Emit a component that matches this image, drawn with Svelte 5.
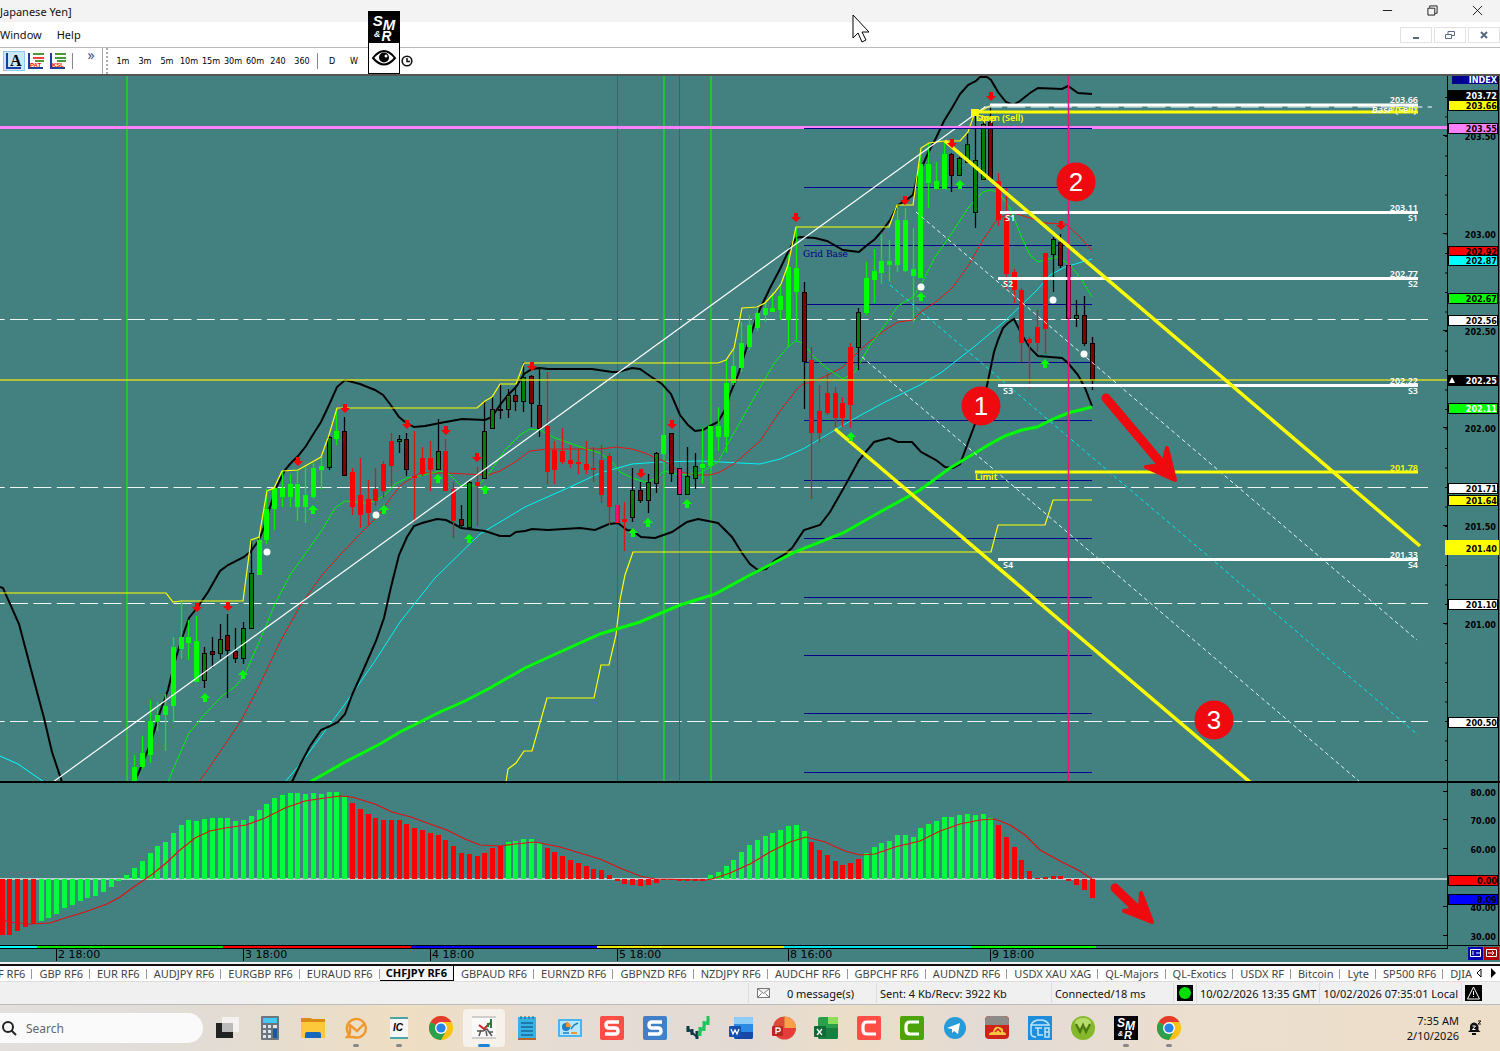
<script>
  const STEP = 7.785
  const FIRST = 134.5
  const ZERO = 879
  const barX = (i) => Math.floor(FIRST + i * STEP) + 0.5

  // kind, high, low, body top, body bottom
  const candles = [
    ['g', 755, 782, 767, 782], ['g', 736, 769, 753, 766], ['g', 700, 763, 721, 754], ['g', 702, 731, 715, 721],
    ['g', 694, 751, 706, 714], ['g', 637, 722, 647, 705], ['g', 600, 659, 637, 648], ['g', 620, 660, 637, 642],
    ['g', 616, 682, 641, 681], ['d', 647, 688, 653, 680], ['m', 637, 668, 651, 654], ['d', 624, 659, 639, 653],
    ['m', 614, 698, 635, 650], ['m', 628, 663, 651, 658], ['d', 622, 664, 628, 658], ['d', 540, 629, 573, 628],
    ['g', 536, 575, 540, 574], ['g', 489, 544, 509, 539], ['g', 487, 530, 488, 508], ['g', 471, 507, 488, 496],
    ['g', 474, 507, 484, 496], ['g', 470, 521, 484, 506], ['g', 467, 523, 495, 506], ['g', 463, 499, 468, 496],
    ['g', 456, 489, 466, 469], ['d', 436, 470, 437, 467], ['g', 408, 445, 431, 438], ['m', 417, 476, 431, 475],
    ['r', 468, 515, 472, 506], ['r', 458, 528, 495, 514], ['r', 480, 526, 499, 512], ['r', 468, 506, 489, 500],
    ['r', 461, 498, 464, 490], ['r', 433, 486, 441, 465], ['d', 435, 453, 439, 441], ['m', 433, 476, 439, 469],
    ['r', 431, 522, 476, 477], ['r', 447, 476, 458, 473], ['r', 441, 491, 458, 469], ['d', 419, 469, 451, 469],
    ['r', 439, 491, 451, 490], ['r', 482, 538, 489, 520], ['m', 505, 528, 519, 525], ['d', 481, 529, 482, 527],
    ['r', 467, 526, 482, 485], ['d', 401, 479, 431, 478], ['d', 397, 428, 409, 428], ['d', 384, 419, 409, 410],
    ['d', 389, 418, 395, 409], ['m', 388, 411, 395, 401], ['d', 362, 412, 377, 401], ['m', 375, 427, 376, 403],
    ['m', 367, 437, 405, 428], ['r', 372, 484, 426, 471], ['r', 441, 484, 450, 469], ['r', 428, 464, 451, 461],
    ['r', 445, 468, 460, 463], ['r', 449, 474, 462, 463], ['r', 441, 474, 464, 469], ['r', 447, 482, 468, 469],
    ['r', 445, 503, 460, 494], ['r', 453, 525, 456, 506], ['r', 505, 522, 505, 522], ['r', 502, 551, 519, 521],
    ['d', 468, 522, 490, 517], ['m', 482, 503, 490, 500], ['d', 474, 513, 482, 500], ['d', 452, 493, 453, 483],
    ['g', 435, 453, 435, 453], ['m', 433, 482, 433, 473], ['m', 468, 494, 468, 494], ['d', 447, 494, 476, 494],
    ['d', 453, 489, 466, 478], ['g', 428, 484, 464, 467], ['g', 426, 465, 426, 465], ['g', 407, 451, 426, 436],
    ['g', 360, 453, 383, 436], ['g', 350, 385, 366, 382], ['g', 322, 372, 343, 367], ['g', 315, 350, 325, 346],
    ['g', 308, 331, 313, 327], ['g', 302, 322, 308, 314], ['g', 293, 312, 308, 311], ['g', 284, 320, 296, 309],
    ['g', 255, 347, 267, 319], ['g', 227, 341, 268, 291], ['m', 282, 409, 292, 361], ['r', 347, 499, 360, 432],
    ['r', 385, 442, 411, 432], ['r', 373, 415, 393, 412], ['r', 387, 427, 393, 417], ['r', 397, 427, 403, 417],
    ['r', 343, 428, 347, 404], ['d', 308, 370, 312, 347], ['g', 262, 315, 278, 312], ['g', 249, 303, 271, 279],
    ['g', 234, 284, 261, 272], ['g', 240, 282, 261, 264], ['g', 206, 272, 220, 264], ['g', 208, 272, 220, 270],
    ['g', 228, 322, 269, 275], ['g', 150, 278, 164, 277], ['g', 143, 208, 164, 182], ['g', 162, 188, 181, 188],
    ['g', 142, 188, 154, 188], ['m', 153, 192, 154, 175], ['d', 157, 176, 158, 175], ['d', 133, 163, 144, 162],
    ['d', 112, 228, 160, 212], ['d', 122, 180, 124, 179], ['m', 106, 179, 122, 178], ['r', 173, 226, 181, 219],
    ['r', 188, 289, 218, 273], ['r', 269, 303, 272, 289], ['r', 288, 362, 290, 342], ['r', 337, 388, 339, 342],
    ['r', 310, 352, 327, 342], ['r', 253, 354, 253, 328], ['d', 237, 292, 239, 254], ['m', 234, 268, 242, 265],
    ['m', 265, 318, 265, 318], ['d', 300, 327, 315, 318], ['m', 296, 346, 315, 343], ['m', 337, 390, 343, 380]
  ]
  const bodyFill = { g: '#00ff00', d: '#008000', m: '#800000', r: '#ff0000' }
  const wickFill = { g: '#00f000', d: '#000', m: '#000', r: '#d81818' }

  const histStart = -17
  const hist = [
    935, 935, 931, 927, 924, 921, 918, 914, 908, 905, 901, 898, 896, 892, 887, 881, 875, 868, 861, 853, 846, 842,
    833, 825, 820, 821, 819, 818, 818, 818, 821, 820, 816, 810, 804, 798, 795, 793, 793, 794, 793, 794, 792, 792,
    797, 803, 809, 814, 818, 820, 820, 820, 824, 828, 830, 833, 835, 840, 846, 853, 854, 856, 853, 848, 846, 842,
    841, 839, 839, 843, 848, 852, 856, 860, 863, 866, 869, 870, 875, 881, 884, 885, 886, 885, 883, 880, 880, 881,
    881, 881, 881, 875, 872, 866, 860, 852, 845, 840, 836, 833, 830, 826, 825, 831, 842, 850, 855, 861, 865, 863,
    859, 853, 847, 843, 841, 835, 835, 837, 828, 824, 821, 817, 817, 815, 814, 815, 814, 818, 825, 837, 847, 860,
    871, 878, 877, 876, 876, 881, 885, 890, 898
  ]
  const rising = [[-12, 27], [48, 52], [74, 86], [94, 110]]
  const histBars = hist.map((y, n) => {
    const i = n + histStart
    const up = rising.some(([a, b]) => i >= a && i <= b)
    return { x: barX(i) - 2.5, y: Math.min(y, ZERO), h: Math.max(1, Math.abs(y - ZERO)), up }
  })

  const bands = [
    '0,587 3,588 19,624 33,677 44,718 52,752 62,782',
    '134,782 139,772 150,745 160,712 168,690 175,661 181,641 189,618 197,608 208,592 220,571 228,565 244,557 251,551 259,540 264,527 270,507 277,486 285,470 290,464 298,456 306,446 314,433 321,422 329,405 337,387 345,380 360,384 375,390 383,395 390,404 399,417 405,422 414,427 425,426 440,423 462,419 485,420 492,417 500,405 508,395 516,387 524,374 532,369 540,368 548,369 592,369 612,372 618,372 632,368 640,369 650,376 662,384 671,394 680,415 688,425 695,431 703,430 710,426 718,422 726,408 730,394 738,375 749,340 755,322 760,309 770,288 780,269 788,252 796,238 800,237 815,238 827,241 843,250 859,252 866,246 875,239 882,231 890,220 898,205 905,201 913,195 917,178 922,167 928,153 936,138 944,121 952,108 960,94 968,85 976,81 980,77 987,77 991,80 998,92 1006,102 1013,105 1020,101 1030,93 1038,88 1062,89 1068,86 1078,93 1092,94',
    '292,782 300,765 310,746 321,730 330,726 338,722 345,714 352,695 362,673 376,641 384,618 391,587 399,555 407,537 414,526 422,523 437,519 446,520 454,524 461,528 485,531 500,536 510,536 516,532 525,531 532,529 548,530 580,528 595,530 609,524 618,523 627,530 633,531 641,537 655,538 672,532 687,522 698,519 718,523 732,537 742,553 750,564 758,570 766,569 775,560 785,554 792,548 804,530 820,525 830,512 846,484 859,460 874,442 889,438 898,442 912,442 921,452 936,460 945,467 953,468 960,464 975,424 985,395 994,352 998,340 1003,328 1008,323 1014,319 1022,335 1030,348 1038,356 1062,358 1068,363 1078,375 1085,388 1092,406'
  ]
  const channelHigh = '0,593 166,593 173,602 181,601 243,601 251,540 259,537 267,491 274,488 282,471 298,470 321,457 329,435 337,408 477,408 485,401 492,397 500,384 516,384 524,363 718,363 726,360 734,348 742,308 757,307 765,303 775,292 781,284 788,265 796,227 889,227 897,205 913,205 921,148 929,143 944,141 960,141 968,132 975,112 983,110 991,105 1092,105'
  const channelLow = '506,782 508,769 516,763 524,751 532,751 547,698 594,698 601,665 609,665 616,635 620,600 625,575 633,552 991,552 998,525 1045,525 1053,500 1092,500'
  const redMa = '199,782 213,762 228,740 242,719 260,684 280,642 300,606 322,575 340,555 360,534 378,516 390,499 400,486 407,481 420,473 447,473 465,474 488,475 500,471 515,462 530,451 547,449 600,449 617,447 632,449 645,453 656,458 668,463 680,472 695,475 710,475 720,472 735,463 760,441 780,411 797,389 803,384 815,381 828,375 843,367 858,352 870,341 885,330 898,322 913,320 921,312 937,301 952,288 968,266 983,240 998,218 1014,213 1030,218 1045,223 1066,224 1080,237 1092,251'
  const greenMa = '168,782 175,765 189,733 205,714 222,696 236,686 245,674 260,640 275,604 290,575 308,550 322,530 335,508 345,501 365,503 375,501 385,495 395,484 407,478 420,476 440,471 448,473 460,485 478,486 490,472 505,450 520,435 530,429 540,430 555,438 575,445 590,450 600,453 612,462 620,472 632,478 645,482 655,479 664,471 680,475 700,473 718,462 730,440 755,396 775,362 788,347 796,341 803,343 815,358 828,369 843,379 855,372 870,345 885,325 898,306 913,297 921,285 935,257 952,233 968,208 983,192 990,190 998,192 1010,208 1022,238 1030,255 1038,262 1048,259 1058,257 1070,265 1082,280 1092,297'
  const cyanMa = '285,782 305,758 345,704 375,661 400,622 435,578 480,534 525,507 570,487 600,473 632,464 660,462 700,461 760,464 780,459 803,449 835,430 850,421 885,402 920,385 942,372 975,346 1005,321 1037,290 1050,275 1065,267 1092,259'
  const slowMa = '310,782 345,762 380,744 400,732 440,712 465,701 490,688 525,668 560,652 600,634 640,622 680,605 715,594 750,575 797,551 843,533 880,512 920,490 950,468 990,444 1005,436 1022,430 1037,427 1053,419 1068,413 1092,407'
  const signal = '0,918 8,922 30,924 50,923 65,918 85,912 107,904 120,897 135,886 150,876 165,864 180,850 195,838 210,831 225,828 246,825 265,818 285,808 305,801 325,798 340,796 352,797 375,804 392,812 411,817 430,824 447,830 465,839 480,845 500,846 515,844 535,842 560,847 580,853 600,859 620,868 640,876 655,879 705,880 712,879 730,873 750,864 770,852 790,842 806,837 825,842 845,851 860,855 875,854 895,847 920,841 940,831 960,824 980,820 995,819 1010,825 1025,835 1040,850 1060,861 1080,871 1092,879'

  const gridRows = [128, 187, 245, 304, 362, 420, 480, 538, 597, 655, 713, 772]
  const sells = [[197, 607], [228, 606], [298, 461], [345, 408], [407, 424], [446, 430], [477, 457], [532, 366], [641, 473], [672, 424], [796, 217], [905, 200], [952, 143], [991, 96], [1061, 225]]
  const buys = [[205, 697], [243, 674], [313, 509], [384, 509], [438, 478], [469, 538], [485, 489], [633, 532], [648, 522], [687, 503], [960, 184], [921, 296], [1045, 363], [851, 436]]
  const dots = [[267, 552], [376, 515], [921, 287], [1053, 300], [1084, 354]]
  const supports = [
    { y: 212, x: 1000, price: '203.11', name: 'S1' },
    { y: 278, x: 998, price: '202.77', name: 'S2' },
    { y: 385, x: 998, price: '202.22', name: 'S3' },
    { y: 559, x: 998, price: '201.33', name: 'S4' }
  ]
  const callouts = [[981, 406, 1], [1076, 182, 2], [1214, 720, 3]]

  const priceTicks = Array.from({ length: 35 }, (_, n) => 97.5 + n * 19.5).filter((y) => y < 780)
  const scale = [[136, '203.50'], [234, '203.00'], [331, '202.50'], [428, '202.00'], [526, '201.50'], [624, '201.00'], [792, '80.00'], [820, '70.00'], [849, '60.00'], [907, '40.00'], [936, '30.00']]
  // y, text, background, text colour
  const tags = [
    [95, '203.72', '#000', '#fff'], [105, '203.66', '#ffff00', '#000'], [128, '203.55', '#ff80ff', '#000'],
    [251, '202.92', '#ff0000', '#000'], [260, '202.87', '#00ffff', '#000'], [298, '202.67', '#00ff00', '#000'],
    [320, '202.56', '#fff', '#000'], [380, '202.25', '#000', '#fff'], [408, '202.11', '#00ff00', '#fff'],
    [488, '201.71', '#fff', '#000'], [500, '201.64', '#ffff00', '#000'], [604, '201.10', '#fff', '#000'],
    [722, '200.50', '#fff', '#000'], [899, '8.09', '#0000ff', '#000'], [880, '0.00', '#ff0000', '#000']
  ]
  const dayBands = [[0, 37, '#00ffff'], [37, 223, '#00e800'], [223, 411, '#ff0000'], [411, 597, '#0000ff'], [597, 784, '#e8e800'], [784, 971, '#00e0e8'], [971, 1096, '#00ff00']]
  const times = [[56, '2 18:00'], [243, '3 18:00'], [430, '4 18:00'], [617, '5 18:00'], [788, '8 16:00'], [990, '9 18:00']]

  const periods = ['1m', '3m', '5m', '10m', '15m', '30m', '60m', '240', '360']
  const tabs = ['F RF6', 'GBP RF6', 'EUR RF6', 'AUDJPY RF6', 'EURGBP RF6', 'EURAUD RF6', 'CHFJPY RF6', 'GBPAUD RF6', 'EURNZD RF6', 'GBPNZD RF6', 'NZDJPY RF6', 'AUDCHF RF6', 'GBPCHF RF6', 'AUDNZD RF6', 'USDX XAU XAG', 'QL-Majors', 'QL-Exotics', 'USDX RF', 'Bitcoin', 'Lyte', 'SP500 RF6', 'DJIA']
  let active = $state('CHFJPY RF6')

  const apps = ['taskview', 'calculator', 'files', 'mail', 'ic', 'chrome', 'charts', 'notepad', 'control', 'snagit', 'snagit-blue', 'trading', 'word', 'powerpoint', 'excel', 'camtasia', 'camtasia-green', 'telegram', 'pot', 'remote', 'webroot', 'smr', 'chrome-work']
  const running = ['mail', 'ic', 'smr', 'chrome-work']
</script>

{#snippet smr()}
  <rect width="24" height="24" fill="#000" />
  <g fill="#fff" font-family="Liberation Sans, sans-serif" font-weight="bold" font-style="italic">
    <text x="3" y="11" font-size="12">S</text>
    <text x="11" y="14" font-size="12">M</text>
    <text x="4" y="20" font-size="7">&amp;</text>
    <text x="10" y="23" font-size="11">R</text>
  </g>
{/snippet}

{#snippet appIcon(name)}
  <svg class="icon" viewBox="0 0 24 24" aria-hidden="true">
    {#if name === 'taskview'}
      <rect x="1" y="7" width="17" height="15" fill="#222" />
      <rect x="7" y="1" width="17" height="15" fill="#f4f4f4" opacity=".9" />
      <rect x="7" y="7" width="11" height="9" fill="#bbb" />
    {:else if name === 'calculator'}
      <rect x="3" width="18" height="24" rx="1" fill="#6b7580" />
      <rect x="5" y="2" width="14" height="5" fill="#45c8f5" />
      {#each [9, 14, 19] as y}
        <rect x="5" {y} width="3" height="3" fill="#dfe5ea" />
        <rect x="10" {y} width="3" height="3" fill="#dfe5ea" />
      {/each}
      <rect x="15" y="9" width="4" height="3" fill="#dfe5ea" />
      <rect x="15" y="13" width="4" height="9" fill="#1558a8" />
    {:else if name === 'files'}
      <path d="M0 2h9l3 1h12v19H0z" fill="#d98a12" />
      <path d="M0 6h24v16H0z" fill="#fdc93a" />
      <path d="M4 22v-4q0-2 2-2h12q2 0 2 2v4z" fill="#1669b8" />
    {:else if name === 'mail'}
      <path d="M6 19.500A9.500 9.500 0 1 1 20 18Q16 23 9 21H3l3-4V9l7 6 7-7" fill="none" stroke="#f0982e" stroke-width="2.400" />
    {:else if name === 'ic'}
      <rect x="3" y="1" width="18" height="22" rx="2" fill="#f7f7f7" />
      <path d="M3 2h18M3 22h18" stroke="#48a8a8" stroke-width="2" />
      <text x="6" y="15" font-size="10" font-weight="bold" font-style="italic" font-family="Liberation Sans, sans-serif">IC</text>
    {:else if name.startsWith('chrome')}
      <circle cx="12" cy="12" r="12" fill="#fbc116" />
      <path d="M12 12L1.600 6A12 12 0 0 1 22.400 6H12z" fill="#e33b2e" />
      <path d="M12 12L1.600 6A12 12 0 0 0 12 24l5-9z" fill="#2b9f4b" />
      <circle cx="12" cy="12" r="6" fill="#fff" />
      <circle cx="12" cy="12" r="4.600" fill="#2484e8" />
    {:else if name === 'charts'}
      <rect y="2" width="24" height="20" fill="#fafafa" />
      <path d="M0 1h24M0 22h24" stroke="#aaa" />
      <path d="M7 9l5 4 6-6" fill="none" stroke="#c22" stroke-width="2" />
      <path d="M19 3v9M16 7v4" stroke="#2a7a3a" stroke-width="2" />
      <path d="M5 15h6l4-2 2 3h4M9 14l-2 6M14 15l1 5M17 16l3 4" fill="none" stroke="#555" stroke-width="1.500" />
    {:else if name === 'notepad'}
      <rect x="3" y="1" width="18" height="22" fill="#36b3e4" />
      <path d="M3 23h18" stroke="#b4652c" stroke-width="2" />
      <path d="M6 7h12M6 11h12M6 15h12M6 19h12" stroke="#146a96" stroke-width="1.500" />
      <path d="M6 0v3M10 0v3M14 0v3M18 0v3" stroke="#245a70" />
    {:else if name === 'control'}
      <rect y="3" width="24" height="18" rx="1" fill="#49b4ee" />
      <rect x="2" y="5" width="20" height="14" fill="#b8e6fc" />
      <circle cx="8" cy="11" r="4" fill="#1d7fc4" />
      <path d="M8 11V6a5 5 0 0 1 5 5z" fill="#f5952f" />
      <path d="M13 13l3-4 4-2M5 17h6" stroke="#1d7fc4" stroke-width="1.500" fill="none" />
      <path d="M13 17h6" stroke="#f5952f" stroke-width="2" />
    {:else if name.startsWith('snagit')}
      <rect width="24" height="24" rx="2" fill={name === 'snagit' ? '#ff4e46' : '#3f80c6'} />
      <path d="M19 6H9q-3 0-3 3t3 3h6q3 0 3 3t-3 3H5" fill="none" stroke="#fff" stroke-width="3.400" />
    {:else if name === 'trading'}
      <path d="M2 10v6M6 13v6M11 15v8" stroke="#123b4a" stroke-width="3" />
      <path d="M1 12l10 9" stroke="#123b4a" stroke-width="2" />
      <path d="M14 11v9M18 5v10M22 0v9" stroke="#1fc45a" stroke-width="3" />
      <path d="M12 19l11-16" stroke="#1fc45a" stroke-width="2" />
    {:else if name === 'word'}
      <rect x="5" y="1" width="19" height="22" rx="2" fill="#2b8ae4" />
      <path d="M5 3q0-2 2-2h15q2 0 2 2v5H5z" fill="#8ecdf8" />
      <path d="M5 16h19v5q0 2-2 2H7q-2 0-2-2z" fill="#1648a8" />
      <rect y="10" width="12" height="11" rx="1" fill="#1450b0" />
      <path d="M2 13l2 5 2-4 2 4 2-5" fill="none" stroke="#fff" stroke-width="1.300" />
    {:else if name === 'powerpoint'}
      <circle cx="12.500" cy="12" r="11.500" fill="#dd4a36" />
      <path d="M12.500.500A11.500 11.500 0 0 1 24 12H12.500z" fill="#f9a04c" />
      <path d="M12.500 12H24A11.500 11.500 0 0 1 5 20z" fill="#e83c3c" />
      <rect y="10" width="11" height="10" rx="1" fill="#b42a20" />
      <path d="M4 18v-6h2.500a1.800 1.800 0 0 1 0 3.600H4" fill="none" stroke="#fff" stroke-width="1.300" />
    {:else if name === 'excel'}
      <rect x="4" y="1" width="20" height="22" rx="2" fill="#26a04a" />
      <path d="M14 1h8q2 0 2 2v5H14z" fill="#8edc5a" />
      <path d="M4 12h20v9q0 2-2 2H6q-2 0-2-2z" fill="#158040" />
      <rect y="10" width="12" height="11" rx="1" fill="#0f6a34" />
      <path d="M3 13l5 6M8 13l-5 6" stroke="#fff" stroke-width="1.300" />
    {:else if name.startsWith('camtasia')}
      <rect width="24" height="24" rx="2" fill={name === 'camtasia' ? '#ff4e46' : '#4da40a'} />
      <path d="M19 6H10q-4 0-4 4v4q0 4 4 4h9" fill="none" stroke="#fff" stroke-width="3.200" />
    {:else if name === 'telegram'}
      <circle cx="12" cy="12" r="11" fill="#279bd8" />
      <path d="M4 12l13-5-2 11-4-3-2 2v-4z" fill="#fff" />
    {:else if name === 'pot'}
      <rect width="24" height="23" rx="4" fill="#cc2418" />
      <path d="M0 9V5q0-5 5-5h14q5 0 5 5v4z" fill="#8d8a88" />
      <path d="M4 19q0-3 4-3 1-6 6-5 5 1 4 5 3 0 3 3z" fill="#fbc540" />
      <path d="M10 16l3-3 3 3" fill="none" stroke="#c22" stroke-width="1.500" />
    {:else if name === 'remote'}
      <rect width="24" height="24" fill="#1e8edc" />
      <path d="M3 9q2-5 9-5t9 5H3v8q0 4 5 4M7 12h7M10 12v7h5M17 12h4v9h-4zM17 16h4" fill="none" stroke="#bfe6fb" stroke-width="1.500" />
    {:else if name === 'webroot'}
      <circle cx="12" cy="12" r="12" fill="#86b82c" />
      <ellipse cx="12" cy="7" rx="8" ry="5" fill="#b8dc6c" />
      <path d="M5 8l4 8 3-7 3 7 4-8" fill="none" stroke="#4b7a12" stroke-width="2.200" />
    {:else}
      {@render smr()}
    {/if}
  </svg>
{/snippet}

<div class="app">
  <header class="titlebar">
    <span>Japanese Yen]</span>
    <div class="window-buttons">
      <button aria-label="Minimize"><svg viewBox="0 0 12 12"><path d="M1 6h10" /></svg></button>
      <button aria-label="Restore"><svg viewBox="0 0 12 12"><path d="M1 3.500h7.500V11H1zM3 3V1h8v8H9" /></svg></button>
      <button aria-label="Close"><svg viewBox="0 0 12 12"><path d="M1 1l10 10M11 1L1 11" /></svg></button>
    </div>
  </header>

  <nav class="menubar">
    <button>Window</button>
    <button>Help</button>
    <div class="child-buttons">
      <button aria-label="Minimize chart"><svg viewBox="0 0 12 12"><path d="M3 9h6" stroke-width="2" /></svg></button>
      <button aria-label="Restore chart"><svg viewBox="0 0 12 12"><path d="M1.500 5.500h6v4h-6zM4 5V2.500h6.500v4H8" /></svg></button>
      <button aria-label="Close chart"><svg viewBox="0 0 12 12"><path d="M3 3l6 6M9 3l-6 6" stroke-width="2" /></svg></button>
    </div>
  </nav>

  <div class="toolbar">
    <button class="tool selected" aria-label="Text">
      <svg viewBox="0 0 18 18"><path d="M2 1v15h14" fill="none" stroke="#1a3fa0" stroke-width="2" /><text x="5" y="14" font-family="Liberation Serif, serif" font-size="16" font-weight="bold">A</text></svg>
    </button>
    {#each ['PAT', 'KSL'] as t, n}
      <button class="tool" aria-label={t}>
        <svg viewBox="0 0 18 18"><path d="M2 1v15h14" fill="none" stroke="#1a3fa0" stroke-width="2" /><path d="M6 2h11M8 9h9" stroke="#4a9a3a" stroke-width="2" /><path d="M6 6h11" stroke={n ? '#4a9a3a' : '#f04040'} stroke-width="2" /><text x="3" y="15" font-family="Liberation Sans, sans-serif" font-size="6" font-weight="bold" fill="#f00">{t}</text></svg>
      </button>
    {/each}
    <span class="rule"></span>
    <button class="more" aria-label="More tools">»</button>
    <span class="grip"></span>
    <div class="periods">
      {#each periods as p}
        <button>{p}</button>
      {/each}
    </div>
    <span class="rule"></span>
    <button class="unit">D</button>
    <button class="unit">W</button>
  </div>

  <svg class="chart" viewBox="0 76 1500 886" role="img" aria-label="CHFJPY chart">
    <defs>
      <clipPath id="plot"><rect x="0" y="76" width="1447" height="706" /></clipPath>
    </defs>
    <rect y="76" width="1500" height="886" fill="#438080" />

    <g clip-path="url(#plot)" fill="none">
      {#each gridRows as y}
        <path d="M804 {y + 0.5}H1092" stroke="#00008c" />
      {/each}
      {#each [319.5, 487.5, 603.5, 721.5] as y}
        <path d="M-13.300 {y}H1428" stroke="#f0f6f6" stroke-dasharray="18 5.350" />
      {/each}
      {#each [127, 664, 711] as x}
        <path d="M{x} 76V782" stroke="#12e612" stroke-width="1.300" />
      {/each}
      <path d="M617.500 76V782M679.500 76V782" stroke="#a03070" />

      <polyline points="0,756 18,764 44,782" stroke="#00ffff" />
      <polyline points={cyanMa} stroke="#00f4f4" />
      <polyline points={redMa} stroke="#e81414" />
      <polyline points={greenMa} stroke="#00f000" />
      {#each bands as b}
        <polyline points={b} stroke="#000" stroke-width="2" />
      {/each}
      {#each candles as [k, hi, lo, top, bot], i}
        <path d="M{barX(i)} {hi}V{lo}" stroke={wickFill[k]} stroke-width="1.300" />
        <rect x={barX(i) - 2} y={top + 0.5} width="4" height={Math.max(1, bot - top)} fill={bodyFill[k]} stroke={k === 'g' || k === 'r' ? bodyFill[k] : '#000'} />
      {/each}
      <polyline points={channelHigh} stroke="#ffff00" stroke-width="1.200" />
      <polyline points={channelLow} stroke="#ffff00" stroke-width="1.200" />
      <polyline points={slowMa} stroke="#00ff00" stroke-width="3" />

      <path d="M0 380H1447" stroke="#d8d820" stroke-width="1.500" />
      <path d="M53 782L985 107" stroke="#fff" stroke-width="1.200" />
      <path d="M916 212L1417 640M862 357L1360 782" stroke="#e8f4f4" stroke-dasharray="4 3" />
      <path d="M890 285L1418 735" stroke="#00e8e8" stroke-dasharray="4 3" />

      <path d="M990 105H1418" stroke="#fff" stroke-width="3" />
      <path d="M984 107H1432" stroke="#fff" stroke-dasharray="18 5.350" />
      <path d="M975 112H1418M975 472H1418" stroke="#ffff00" stroke-width="3" />
      <rect x="971" y="109" width="8" height="7" fill="#ffff00" />
      {#each supports as s}
        <path d="M{s.x} {s.y + 0.5}H1418" stroke="#fff" stroke-width="3" />
      {/each}
      <path d="M0 127.500H1447" stroke="#ff80ff" stroke-width="3" />
      <path d="M804 128.500H1092" stroke="#00008c" />
      <path d="M1068.500 76V782" stroke="#f0107c" stroke-width="1.500" />
      <path d="M617 505V522M680 469V494M1069 266V318" stroke="#f0107c" stroke-width="3" />
      <path d="M945 141L1420 546M835 429L1250 782" stroke="#ffff00" stroke-width="3.500" />
    </g>

    {#each sells as [x, y]}
      <path d="M{x - 2} {y - 4}h4v4h3l-5 5-5-5h3z" fill="#ff0000" />
    {/each}
    {#each buys as [x, y]}
      <path d="M{x - 2} {y + 5}h4v-4h3l-5-5-5 5h3z" fill="#00ff00" />
    {/each}
    {#each dots as [x, y]}
      <circle cx={x} cy={y} r="3.500" fill="#fff" />
    {/each}

    <g class="mark" fill="#fff">
      {#each supports as s}
        <text x={s.x + 5} y={s.y + 9}>{s.name}</text>
        <text x="1418" y={s.y - 1} text-anchor="end">{s.price}</text>
        <text x="1418" y={s.y + 9} text-anchor="end">{s.name}</text>
      {/each}
      <text x="1418" y="103" text-anchor="end">203.66</text>
      <text x="1372" y="113">Base (Sell)</text>
    </g>
    <g class="mark" fill="#ffff00">
      <text x="976" y="121">Stop</text>
      <text x="976" y="121">Open (Sell)</text>
      <text x="1418" y="113" text-anchor="end">203.62</text>
      <text x="975" y="480">Limit</text>
      <text x="1418" y="471" text-anchor="end">201.78</text>
    </g>
    <text class="grid-label" x="803" y="257">Grid Base</text>

    {#each callouts as [x, y, n]}
      <circle cx={x} cy={y} r="19.500" fill="#ee0a0e" />
      <text class="callout" {x} y={y + 9} text-anchor="middle">{n}</text>
    {/each}
    <g fill="none" stroke="#ee0a0e" stroke-linecap="round" stroke-linejoin="round">
      <path d="M1106 398L1160 462" stroke-width="9" />
      <path d="M1146 467L1175 480L1167 448L1163 465z" stroke-width="4" fill="#ee0a0e" />
      <path d="M1115 888L1141 913" stroke-width="9" />
      <path d="M1124 911L1152 922L1141 893L1140 908z" stroke-width="4" fill="#ee0a0e" />
    </g>

    <path d="M0 782H1500" stroke="#000" stroke-width="2" />
    <path d="M0 879H1447" stroke="#dce8e8" stroke-width="1.500" />
    {#each histBars as b}
      <rect x={b.x} y={b.y} width="5" height={b.h} fill={b.up ? '#00ff3c' : '#ff0000'} />
    {/each}
    <polyline points={signal} fill="none" stroke="#e01010" stroke-width="1.200" />

    <path d="M0 945.500H1500M0 948.500H1448M1447.500 76V948M1498.500 76V946" stroke="#000" fill="none" />
    {#each dayBands as [a, b, c]}
      <rect x={a} y="946" width={b - a} height="2" fill={c} />
    {/each}
    {#each times as [x, t]}
      <path d="M{x + 0.5} 949V961" stroke="#000" />
      <text class="time" x={x + 2} y="958">{t}</text>
    {/each}
    {#each priceTicks as y}
      <path d="M1445 {y}H1448" stroke="#000" />
    {/each}
    {#each scale as [y, t]}
      <path d="M1443 {y - 0.5}H1448" stroke="#000" />
      <text class="price" x="1496" y={y + 4} text-anchor="end">{t}</text>
    {/each}
    <rect x="1452" y="76" width="46" height="8" fill="#000090" />
    <text class="price" x="1497" y="83" text-anchor="end" fill="#fff">INDEX</text>
    {#each tags as [y, t, bg, fg]}
      <rect x="1448.500" y={y - 4.5} width="49" height="10" fill={bg} stroke="#000" />
      <text class="price" x="1497" y={y + 4} text-anchor="end" fill={fg}>{t}</text>
    {/each}
    <path d="M1449 383l3-6 3 6z" fill="#fff" />
    <rect x="1445" y="540" width="54" height="15" fill="#ffff00" />
    <text class="price" x="1497" y="552" text-anchor="end">201.40</text>

    <rect x="1468" y="947" width="15" height="13" fill="#0000b0" />
    <rect x="1484" y="947" width="15" height="13" fill="#b00000" />
    <path d="M1470.500 949.500h10v7h-10zM1473 951v4M1480 953h-4M1486.500 949.500h10v7h-10zM1488 953h6M1492 951l2 2-2 2" fill="none" stroke="#fff" />
  </svg>

  <div class="tabs">
    <div class="tab-list">
      {#each tabs as t}
        <button class:active={t === active} onclick={() => active = t}>{t}</button>
      {/each}
    </div>
    <button class="scroll" aria-label="Scroll left"><svg viewBox="0 0 8 10"><path d="M6 1L2 5l4 4z" fill="none" stroke="#000" /></svg></button>
    <button class="scroll" aria-label="Scroll right"><svg viewBox="0 0 8 10"><path d="M2 0l5 5-5 5z" /></svg></button>
  </div>

  <div class="status">
    <span class="cell messages">
      <svg viewBox="0 0 13 10" width="13" height="10"><path d="M.5.500h12v9H.5zl6 5 6-5M.5 9.500l4-4M12.500 9.500l-4-4" fill="#fff" stroke="#777" /></svg>
      0 message(s)
    </span>
    <span class="cell traffic">Sent: 4 Kb/Recv: 3922 Kb</span>
    <span class="cell link">Connected/18 ms</span>
    <span class="cell"><svg viewBox="0 0 16 16" width="16" height="16"><rect width="16" height="16" /><circle cx="8" cy="8" r="6" fill="#00e000" /></svg></span>
    <span class="cell">10/02/2026 13:35 GMT</span>
    <span class="cell">10/02/2026 07:35:01 Local</span>
    <span class="cell"><svg viewBox="0 0 17 16" width="17" height="16"><rect width="17" height="16" /><path d="M8.500 2l6 12h-12zM8.500 6v4M8.500 11v1" fill="none" stroke="#fff" /></svg></span>
  </div>

  <footer class="taskbar">
    <label class="search">
      <svg viewBox="0 0 16 16" width="16" height="16"><circle cx="7" cy="7" r="5" fill="none" stroke="#222" stroke-width="2" /><path d="M10.500 10.500L15 15" stroke="#222" stroke-width="2" /></svg>
      <input type="text" placeholder="Search" aria-label="Search" />
    </label>
    <div class="apps">
      {#each apps as name}
        <button class:current={name === 'charts'} class:running={running.includes(name)} aria-label={name}>
          {@render appIcon(name)}
        </button>
      {/each}
    </div>
    <div class="clock">
      <span>7:35 AM</span>
      <span>2/10/2026</span>
    </div>
    <svg class="bell" viewBox="0 0 16 16" aria-hidden="true"><path d="M1 12l2-2V7q0-4 4-4.500 4 .5 4.500 4.500v3l2 2zM5 13h4v2H5z" fill="#111" /><path d="M5.500 6h3l-3 3.500h3" fill="none" stroke="#fff" /><path d="M11 1h3l-3 3h3" fill="none" stroke="#111" /></svg>
  </footer>

  <div class="smr">
    <svg viewBox="0 0 24 24">{@render smr()}</svg>
    <svg class="eye" viewBox="0 0 30 30"><path d="M4 15q11-14 22 0-11 13-22 0z" fill="#fff" stroke="#000" stroke-width="2" /><circle cx="15" cy="14.500" r="5" /><circle cx="17" cy="13" r="1.500" fill="#fff" /></svg>
  </div>
  <svg class="timer" viewBox="0 0 12 12"><circle cx="6" cy="6" r="4.800" fill="#fff" stroke="#111" stroke-width="1.600" /><path d="M6 3v3.500h3" fill="none" stroke="#111" stroke-width="1.500" /></svg>
  <svg class="cursor" viewBox="0 0 20 30"><path d="M1 1v23l5-5 4 9 4-2-4-8h7z" fill="#fff" stroke="#000" /></svg>
</div>

<style>
  :global(body) {
    margin: 0;
    background: #f0f0f0;
  }

  .app {
    position: relative;
    font-family: "Noto Sans", "Open Sans", sans-serif;
    font-size: 11px;
    color: #111;
    overflow: hidden;
  }

  button {
    border: none;
    background: none;
    padding: 0;
    font: inherit;
    color: inherit;
    flex: none;
  }

  .titlebar {
    display: flex;
    align-items: center;
    justify-content: space-between;
    height: 22px;
    background: #f3f3f3;
  }

  .window-buttons {
    display: flex;
  }

  .window-buttons button {
    width: 45px;
    height: 22px;
  }

  .window-buttons svg {
    width: 11px;
    height: 11px;
    fill: none;
    stroke: #111;
  }

  .menubar {
    display: flex;
    align-items: center;
    gap: 15px;
    height: 25px;
    background: #fff;
    border-bottom: 1px solid #bbb;
  }

  .child-buttons {
    display: flex;
    gap: 2px;
    margin-left: auto;
  }

  .child-buttons button {
    display: grid;
    place-items: center;
    box-sizing: border-box;
    width: 32px;
    height: 16px;
    border: 1px solid #e2e2e2;
  }

  .child-buttons svg {
    width: 12px;
    height: 12px;
    fill: none;
    stroke: #5a6a80;
  }

  .toolbar {
    display: flex;
    align-items: center;
    height: 26px;
    padding-left: 3px;
    background: #fff;
    border-bottom: 2px solid #555;
  }

  .tool {
    display: grid;
    place-items: center;
    width: 22px;
    height: 20px;
  }

  .tool svg {
    width: 18px;
    height: 18px;
  }

  .selected {
    background: #cbe8fa;
    box-shadow: inset 0 0 0 1px #8ccaf0;
  }

  .rule {
    width: 1px;
    height: 16px;
    margin: 0 3px;
    background: #888;
  }

  .more {
    align-self: flex-start;
    margin-left: 8px;
    width: 14px;
    color: #3c4c90;
    font-size: 14px;
    line-height: 14px;
  }

  .grip {
    height: 26px;
    margin: 0 4px;
    border-left: 1px solid #aaa;
    border-right: 2px dotted #aaa;
    width: 3px;
  }

  .periods {
    display: flex;
  }

  .periods button,
  .unit {
    width: 22px;
    font-family: "DejaVu Sans Condensed", "DejaVu Sans", sans-serif;
    font-size: 9px;
    color: #000;
  }

  .periods button:nth-child(n + 8) {
    width: 24px;
  }

  .chart {
    display: block;
    width: 100%;
  }

  .mark {
    font-size: 9px;
    font-weight: 600;
  }

  .grid-label {
    font-family: "DejaVu Serif", serif;
    font-size: 9px;
    fill: #000080;
  }

  .callout {
    font-family: "Liberation Sans", sans-serif;
    font-size: 26px;
    fill: #fff;
  }

  .price {
    font-family: "DejaVu Sans Condensed", "DejaVu Sans", sans-serif;
    font-size: 9px;
    font-weight: 700;
  }

  .time {
    font-family: "DejaVu Sans", sans-serif;
    font-size: 11px;
  }

  .tabs {
    display: flex;
    align-items: center;
    height: 15px;
    margin-top: 2px;
    background: #fff;
    border-top: 2px solid #111;
    border-bottom: 1px solid #ddd;
  }

  .tab-list {
    display: flex;
    flex: 1;
    min-width: 0;
    margin-left: -2px;
    overflow: hidden;
  }

  .tab-list button {
    height: 15px;
    padding-right: 7px;
    margin-right: 7px;
    line-height: 14px;
    color: #444;
    background: linear-gradient(#999, #999) right center / 1px 10px no-repeat;
  }

  .tab-list .active {
    margin-left: -7px;
    padding: 0 6px;
    box-sizing: border-box;
    border-right: 1px solid #000;
    border-bottom: 1px solid #000;
    background: #f4f4f4;
    color: #000;
    font-weight: 700;
  }

  .scroll {
    width: 14px;
    height: 15px;
  }

  .scroll svg {
    width: 8px;
    height: 10px;
  }

  .status {
    display: flex;
    justify-content: flex-end;
    align-items: center;
    height: 22px;
    padding-right: 15px;
    border-bottom: 1px solid #bbb;
    background: #f0f0f0;
  }

  .cell {
    display: flex;
    align-items: center;
    box-sizing: border-box;
    height: 20px;
    padding: 0 3px;
    border-left: 1px solid #ddd;
    white-space: nowrap;
  }

  .messages {
    width: 128px;
    padding-left: 8px;
    gap: 17px;
  }

  .traffic {
    width: 175px;
  }

  .link {
    width: 122px;
  }

  .taskbar {
    display: flex;
    align-items: center;
    height: 46px;
    background: linear-gradient(90deg, #e2dfdd 0, #e2dcd5 14%, #efdec2 27%, #e5dcd4 37%, #e3dad4 50%, #ecdec7 57%, #e2dad5 66%, #ecdfcf 80%, #ecdec8);
  }

  .search {
    display: flex;
    align-items: center;
    gap: 7px;
    box-sizing: border-box;
    width: 203px;
    height: 30px;
    padding-left: 1px;
    flex: none;
    background: #fafafa;
    border-radius: 0 15px 15px 0;
  }

  .search input {
    width: 140px;
    border: none;
    outline: none;
    background: none;
    font: inherit;
    font-size: 12px;
  }

  .search input::placeholder {
    color: #666;
  }

  .apps {
    display: grid;
    grid-template-columns: repeat(23, 1fr);
    width: 984px;
    margin-left: 3px;
  }

  .apps button {
    position: relative;
    display: grid;
    place-items: center;
    height: 38px;
    border-radius: 4px;
  }

  .current {
    background: #f6f1ea;
  }

  .running::after,
  .current::after {
    content: "";
    position: absolute;
    bottom: 0;
    left: 50%;
    width: 6px;
    height: 3px;
    margin-left: -3px;
    border-radius: 2px;
    background: #888;
  }

  .current::after {
    width: 12px;
    margin-left: -6px;
    background: #1a84d8;
  }

  .icon {
    width: 24px;
    height: 24px;
  }

  .clock {
    display: flex;
    flex-direction: column;
    align-items: flex-end;
    margin-left: auto;
    line-height: 15px;
  }

  .bell {
    width: 16px;
    height: 16px;
    margin: 0 17px 0 8px;
  }

  .smr {
    position: absolute;
    left: 368px;
    top: 11px;
    width: 30px;
    border: 1px solid #000;
    background: #fff;
  }

  .smr svg {
    display: block;
  }

  .smr .eye {
    border-top: 1px solid #000;
  }

  .timer {
    position: absolute;
    left: 401px;
    top: 55px;
    width: 12px;
  }

  .cursor {
    position: absolute;
    left: 852px;
    top: 14px;
    width: 20px;
  }
</style>
